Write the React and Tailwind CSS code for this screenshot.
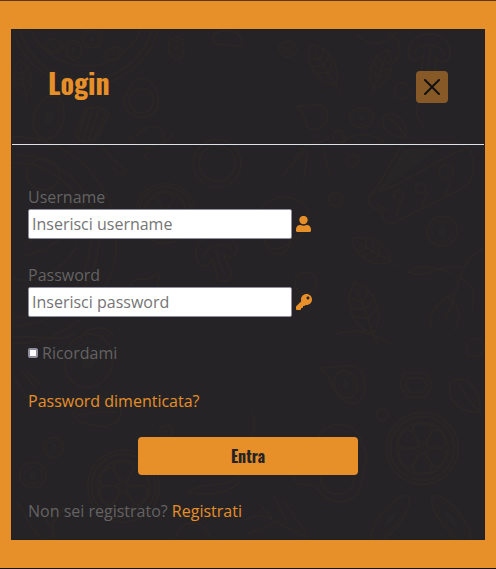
import { FaKey } from 'react-icons/fa';

const heading = "font-['Oswald','Liberation_Sans_Narrow','Roboto',sans-serif] font-bold";

function UserIcon(props) {
  return (
    <svg viewBox="0 0 16 16" fill="currentColor" {...props}>
      <circle cx="7.5" cy="4" r="4.2" />
      <path d="M4.2 9C4.9 9 5.3 9.7 7.5 9.7C9.7 9.7 10.1 9 10.8 9C13.4 9 15 11 15 13.4V14.8C15 15.5 14.5 16 13.8 16H1.2C.5 16 0 15.5 0 14.8V13.4C0 11 1.6 9 4.2 9Z" />
    </svg>
  );
}

function Leaf({ x, y, turn, size = 1 }) {
  return (
    <g transform={`translate(${x} ${y}) rotate(${turn}) scale(${size})`}>
      <path d="M0-28C15-16 19 8 0 25C-19 8-15-16 0-28ZM0-20V36M0-8L8-14M0 0L11-6M0 9L10 3M0-8L-8-14M0 0L-11-6M0 9L-10 3" />
    </g>
  );
}

function Slice({ x, y, r }) {
  return (
    <g transform={`translate(${x} ${y}) scale(${r / 36})`}>
      <circle r="36" />
      <circle r="32" />
      <circle r="26" />
      {[0, 60, 120, 180, 240, 300].map((a) => (
        <path key={a} transform={`rotate(${a})`} d="M0-4C-7-9-11-18-9-22C-4-26 4-26 9-22C11-18 7-9 0-4Z" />
      ))}
    </g>
  );
}

function Oval({ x, y, rx, ry, turn = 0 }) {
  return (
    <g transform={`translate(${x} ${y}) rotate(${turn})`}>
      <ellipse rx={rx} ry={ry} />
      <ellipse rx={rx * 0.7} ry={ry * 0.7} strokeWidth="1" />
      <ellipse rx={rx * 0.3} ry={ry * 0.35} fill="#282527" stroke="none" />
    </g>
  );
}

function Mushroom({ x, y, turn = 0 }) {
  return (
    <g transform={`translate(${x} ${y}) rotate(${turn})`}>
      <path d="M-21 0C-24-14-10-25 2-23C16-22 23-11 20 0C14 8 8 2 6-1L8 20C5 27-5 27-7 20L-6-1C-12 6-18 6-21 0ZM-15-3C-12-12 9-17 15-3M0-8V16" />
    </g>
  );
}

function Doodles() {
  return (
    <svg
      aria-hidden="true"
      className="absolute inset-0 h-full w-full"
      viewBox="11 29 474 511"
      preserveAspectRatio="xMidYMid slice"
      fill="none"
      stroke="#2a2625"
      strokeWidth="2"
      strokeLinecap="round"
    >
      <circle cx="85" cy="10" r="75" />
      <circle cx="85" cy="10" r="69" />
      <circle cx="85" cy="5" r="60" />
      <Oval x={73} y={49} rx={8} ry={10} />
      <Oval x={91} y={38} rx={10} ry={9} />
      <Oval x={53} y={45} rx={9} ry={7} />
      <Oval x={113} y={53} rx={10} ry={6} turn={-25} />
      <Leaf x={22} y={79} turn={-10} size={0.7} />
      <Oval x={48} y={117} rx={15} ry={22} turn={15} />
      <path d="M86 111L77 137M92 109L82 139M98 110L88 139M105 113L94 137M84 110C91 105 103 106 109 113L96 138C88 144 75 141 75 133Z" />
      <path d="M144 78C160 83 162 109 151 114C140 122 120 111 124 98C128 88 134 76 144 78Z" />
      <circle cx="141" cy="100" r="12" />
      <path d="M129 137C142 135 143 125 152 126C164 127 168 137 157 144C146 150 134 145 129 137Z" />
      <Oval x={176} y={47} rx={8} ry={11} />
      <path d="M213 35C221 26 240 28 242 41C239 48 230 45 226 43C218 45 211 43 213 35Z" />
      <Oval x={288} y={48} rx={9} ry={8} />
      <Leaf x={324} y={65} turn={-32} size={0.9} />
      <Leaf x={381} y={70} turn={20} size={0.8} />
      <path d="M357 34C370 46 387 44 396 33M394 62C405 50 402 40 390 32" />
      <Mushroom x={430} y={56} turn={5} />
      <circle cx="403" cy="90" r="8" />
      <path d="M296 105C306 107 323 98 328 113C330 124 318 133 308 127C304 121 307 113 296 105Z" />
      <Oval x={362} y={117} rx={12} ry={10} />
      <path d="M384 116C395 106 408 121 407 137C393 137 381 129 384 116ZM390 118C396 122 402 129 407 137M419 101C415 115 420 121 426 128" />
      <circle cx="339" cy="136" r="6" />
      <path d="M342 144C350 131 378 131 386 144M295 158C306 139 316 146 329 138M282 176L305 150M304 179L308 150M330 174L323 147" />
      <path d="M376 194L402 153L407 148L440 147C420 164 398 178 376 194Z" fill="#282526" stroke="none" />
      <path d="M369 202C369 194 375 191 381 181L402 145C430 139 464 139 472 151C476 166 476 181 463 188L401 219C390 227 382 221 383 211C375 209 371 207 369 202ZM374 193C409 183 433 160 469 147M378 205L390 211M397 215L402 200M422 207L428 193M445 197L451 183" />
      <circle cx="447" cy="171" r="7" />
      <circle cx="421" cy="188" r="5" />
      <circle cx="399" cy="195" r="5" />
      <circle cx="353" cy="160" r="6" />
      <circle cx="12" cy="240" r="78" />
      <circle cx="12" cy="240" r="86" />
      <circle cx="12" cy="240" r="104" />
      <circle cx="42" cy="174" r="16" />
      <path d="M21 245C44 234 65 218 77 193M24 256C54 248 76 229 84 203M13 279C36 285 62 270 76 246" />
      <path d="M99 143C106 147 109 160 124 168C126 176 119 176 113 168M144 157C151 138 166 148 173 133" />
      <circle cx="217" cy="163" r="24" />
      <circle cx="217" cy="163" r="18" />
      <Slice x={165} y={213} r={30} />
      <Mushroom x={218} y={257} turn={-18} />
      <path d="M129 287C139 270 143 286 154 275C164 266 157 291 151 295M110 304C132 290 151 303 157 315M80 339C86 324 108 325 113 337" />
      <path d="M260 212C266 192 303 192 308 212C312 226 303 240 292 238C288 252 264 252 264 238" />
      <circle cx="278" cy="242" r="12" />
      <circle cx="306" cy="283" r="11" />
      <Oval x={336} y={199} rx={7} ry={7} />
      <Leaf x={373} y={251} turn={-60} size={0.85} />
      <Leaf x={365} y={310} turn={-20} size={1.05} />
      <Oval x={443} y={231} rx={15} ry={15} />
      <path d="M484 248C454 264 463 293 446 318M461 267C440 263 427 280 409 272C421 262 439 268 452 273M461 278C480 287 474 300 473 310M453 295C433 302 428 322 433 330M450 299C466 310 458 322 456 330" />
      <path d="M12 338C34 333 61 345 75 333M14 378L26 399M20 370L34 388M27 373L41 387" />
      <Oval x={88} y={361} rx={24} ry={27} turn={15} />
      <path d="M72 415C81 397 104 393 120 408C124 423 108 430 92 425C81 425 76 421 72 415ZM77 416C92 412 104 413 117 412" />
      <Oval x={53} y={448} rx={10} ry={10} />
      <Oval x={32} y={476} rx={13} ry={13} />
      <Slice x={123} y={487} r={36} />
      <Oval x={166} y={432} rx={7} ry={6} />
      <path d="M188 493C200 482 226 491 242 474M188 493C207 496 226 496 240 483M252 412C256 423 256 431 249 440" />
      <path d="M319 367C334 373 350 357 363 374C370 398 359 409 347 402C331 396 335 379 319 367Z" />
      <Oval x={346} y={385} rx={11} ry={14} turn={-20} />
      <path d="M404 373H427L433 386L426 398H408L401 386ZM409 378H423L428 386L422 393H411L406 386Z" />
      <path d="M451 384C463 371 483 389 481 413C465 414 447 404 451 384ZM459 383C464 396 473 404 481 413" />
      <circle cx="383" cy="415" r="6" />
      <Slice x={423} y={449} r={36} />
      <path d="M318 438C330 416 362 425 362 445C373 458 360 473 362 487C353 511 325 503 319 491C307 478 294 493 294 475C311 470 310 451 318 438Z" />
      <circle cx="338" cy="478" r="17" />
      <Oval x={391} y={520} rx={10} ry={29} turn={38} />
      <Oval x={452} y={520} rx={10} ry={29} turn={-38} />
      <path d="M246 521C263 508 280 528 307 538M258 503L276 524M274 498L287 524M249 534L278 523M283 501L306 533" />
      <path d="M16 503C24 513 28 528 40 539M52 506L53 538M40 514L51 529M64 508L54 522M175 539C183 519 202 519 211 539M337 334C350 330 368 329 391 344" />
      <circle cx="476" cy="348" r="9" />
    </svg>
  );
}

function Field({ id, label, type, placeholder, icon: Icon }) {
  return (
    <div>
      <label htmlFor={id} className="block">{label}</label>
      <div className="flex items-center gap-1">
        <input
          id={id}
          name={id}
          type={type}
          placeholder={placeholder}
          className="h-[30px] w-3/5 rounded-xs border border-[#8f8f9d] bg-white px-[3px] text-black placeholder:text-[#757575]"
        />
        <Icon aria-hidden="true" className="size-4 shrink-0 text-[#e78f29]" />
      </div>
    </div>
  );
}

export default function App() {
  return (
    <div className="border-y border-t-[#5a3812] border-b-[#1c1414] bg-[#e78f29] px-[11px] py-7 font-['Open_Sans',sans-serif] text-base text-[#646262]">
      <main className="relative border border-[#222022] bg-[#252326]">
        <Doodles />
        <div className="relative">
          <header className="flex h-[115px] items-center justify-between border-b border-[#dee2e6] px-9">
            <h1 className={`${heading} pb-2 text-[28px] leading-9 text-[#e78f29]`}>Login</h1>
            <button type="button" aria-label="Chiudi" className="flex size-8 items-center justify-center rounded bg-[#e78f29] text-black opacity-50">
              <svg viewBox="0 0 16 16" className="size-4" fill="currentColor" aria-hidden="true">
                <path d="M.293.293a1 1 0 0 1 1.414 0L8 6.586 14.293.293a1 1 0 1 1 1.414 1.414L9.414 8l6.293 6.293a1 1 0 0 1-1.414 1.414L8 9.414l-6.293 6.293a1 1 0 0 1-1.414-1.414L6.586 8 .293 1.707a1 1 0 0 1 0-1.414z" />
              </svg>
            </button>
          </header>
          <form className="flex flex-col gap-6 px-4 pt-10 pb-4" onSubmit={(e) => e.preventDefault()}>
            <Field id="username" label="Username" type="text" placeholder="Inserisci username" icon={UserIcon} />
            <Field id="password" label="Password" type="password" placeholder="Inserisci password" icon={FaKey} />
            <div className="flex items-center gap-1">
              <input
                id="remember"
                type="checkbox"
                className="size-2.5 appearance-none rounded-xs border-2 border-[#8f8f9d] bg-white checked:bg-[#e78f29]"
              />
              <label htmlFor="remember">Ricordami</label>
            </div>
            <a href="#recupero" className="self-start text-[#e78f29]">Password dimenticata?</a>
            <button type="submit" className={`${heading} h-[38px] w-1/2 self-center rounded bg-[#e78f29] text-[#252326]`}>
              Entra
            </button>
            <p>
              Non sei registrato? <a href="#registrati" className="text-[#e78f29]">Registrati</a>
            </p>
          </form>
        </div>
      </main>
    </div>
  );
}
